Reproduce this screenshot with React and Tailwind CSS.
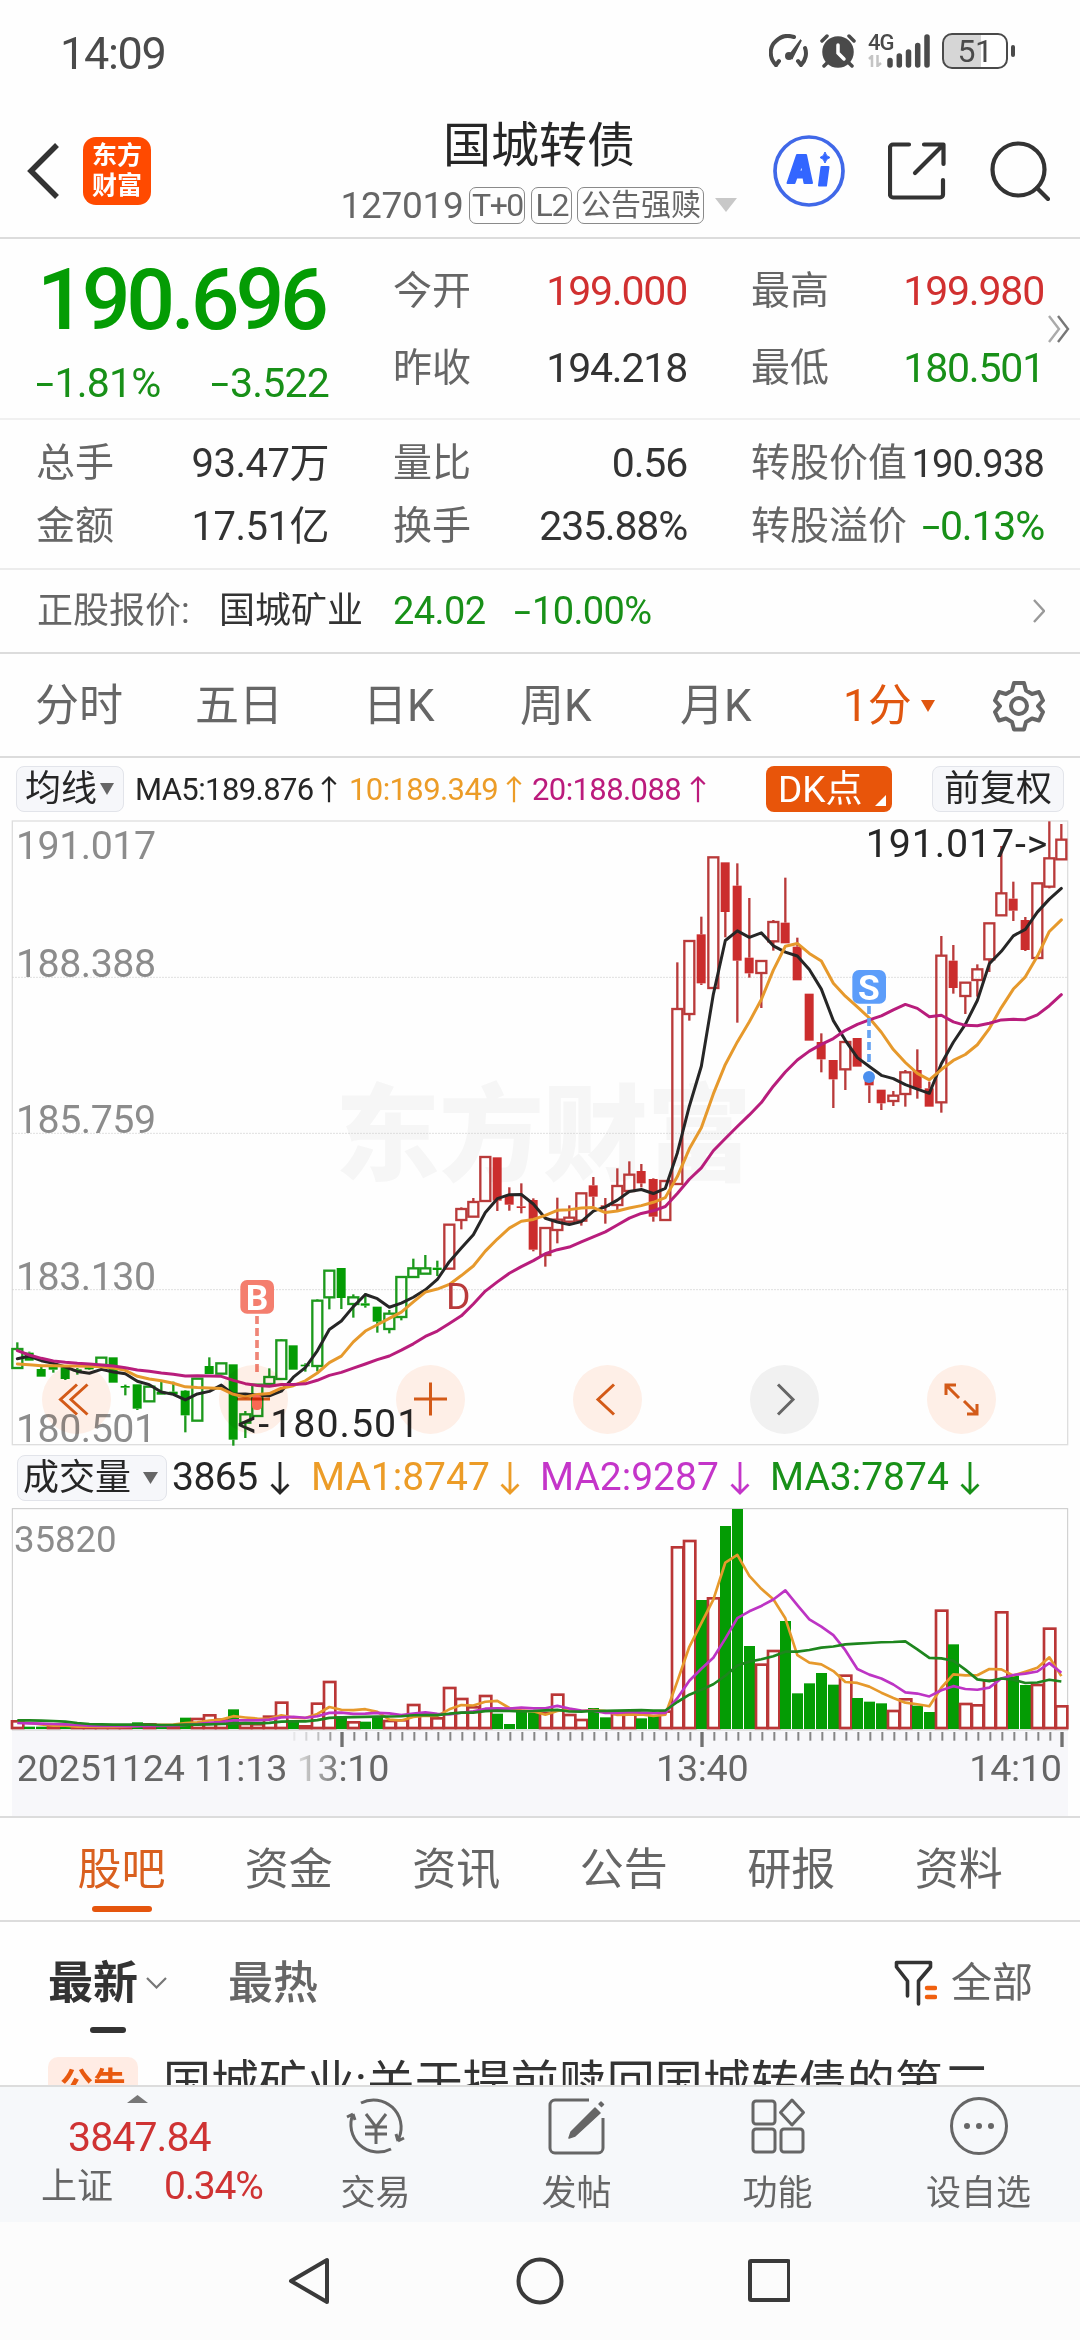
import React from 'react'

const RED = '#b93a3a'
const SOLID_RED = '#cb2d2d'
const GREEN = '#1c991c'
const SOLID_GREEN = '#049c04'

// every chart coordinate is in thirds of a pixel
const STEP = 36
const FIRST = 52
const cx = (i) => FIRST + i * STEP

const shift = (rows, dy) => rows.map(([t, ...v]) => [t, ...v.map((n) => n + dy)])

// [type, high, top, bottom, low], upper case = hollow, lower case = solid
const candles = [
    ...shift([
        ['G', 307, 327, 384, 384], ['g', 335, 338, 362, 362], ['g', 375, 387, 410, 410], ['g', 380, 380, 389, 398],
        ['g', 380, 382, 417, 420], ['g', 384, 388, 394, 404], ['g', 377, 382, 388, 390], ['G', 353, 353, 375, 385],
        ['g', 352, 352, 428, 428], ['g', 434, 438, 443, 466], ['g', 433, 433, 506, 510], ['G', 440, 440, 484, 484],
        ['g', 425, 455, 464, 464], ['g', 425, 455, 463, 463], ['g', 450, 452, 526, 577], ['G', 416, 416, 542, 542],
        ['g', 352, 378, 402, 402], ['G', 370, 370, 401, 401], ['g', 373, 373, 599, 617], ['G', 513, 523, 548, 594],
        ['G', 434, 434, 528, 528], ['G', 385, 411, 432, 432], ['G', 298, 301, 417, 417], ['g', 316, 316, 389, 389],
        ['g', 370, 374, 379, 395], ['G', 178, 182, 378, 394], ['G', 92, 92, 172, 208], ['g', 84, 84, 174, 207],
        ['G', 163, 172, 192, 233], ['g', 160, 190, 197, 203],
    ], 1260),
    ...shift([
        ['g', 770, 770, 815, 848], ['G', 780, 791, 837, 850], ['G', 681, 681, 801, 811], ['G', 626, 655, 681, 681],
        ['G', 615, 655, 671, 671], ['g', 632, 653, 660, 678], ['R', 524, 524, 656, 656], ['R', 472, 477, 510, 538],
        ['R', 444, 456, 500, 500], ['R', 321, 321, 453, 453], ['r', 322, 322, 452, 483], ['r', 412, 438, 464, 482],
        ['r', 400, 469, 474, 490], ['r', 445, 450, 599, 604], ['R', 534, 534, 615, 650], ['R', 443, 509, 540, 580],
        ['R', 466, 503, 515, 520], ['R', 430, 430, 512, 527], ['r', 381, 406, 440, 470], ['r', 444, 466, 471, 521],
        ['R', 355, 408, 465, 483], ['R', 334, 374, 423, 423], ['r', 342, 363, 400, 412], ['r', 385, 387, 500, 515],
        ['R', 393, 393, 510, 510],
    ], 690),
    ...shift([
        ['R', 457, 597, 1122, 1122], ['R', 390, 393, 612, 632], ['r', 320, 373, 520, 525], ['R', 142, 142, 534, 534],
        ['r', 157, 157, 306, 382], ['r', 160, 227, 452, 638], ['r', 264, 443, 490, 503], ['R', 453, 453, 489, 594],
        ['R', 330, 336, 394, 422], ['r', 203, 338, 400, 400], ['r', 383, 410, 511, 511], ['r', 551, 551, 692, 692],
        ['r', 670, 696, 748, 787], ['r', 750, 750, 808, 894], ['R', 696, 696, 778, 840], ['r', 684, 684, 770, 770],
        ['r', 796, 800, 826, 879], ['r', 839, 839, 880, 900], ['R', 843, 857, 873, 888], ['R', 780, 787, 852, 890],
        ['r', 718, 780, 836, 866], ['r', 815, 835, 890, 890], ['R', 378, 437, 877, 908], ['r', 405, 452, 534, 551],
        ['R', 518, 518, 558, 612], ['R', 463, 478, 510, 560], ['R', 340, 340, 448, 486], ['R', 108, 250, 316, 316],
        ['r', 215, 266, 302, 333], ['r', 321, 330, 420, 423], ['R', 220, 220, 444, 444], ['R', 34, 145, 230, 235],
        ['R', 42, 89, 148, 148],
    ], -30),
]

const volumes = [
    'R23', 'g7', 'g7', 'R8', 'g6', 'R7', 'R6', 'R6', 'R7', 'R9', 'g20', 'R14', 'g12', 'R10', 'g34', 'R30', 'R41', 'R28',
    'g59', 'R15', 'R14', 'R37', 'R79', 'g26', 'R8', 'R76', 'R141', 'g38', 'R20', 'g22', 'g36', 'R24', 'R26', 'R72', 'R42',
    'R32', 'R123', 'R90', 'R65', 'R99', 'g46', 'g15', 'g55', 'g50', 'R48', 'R103', 'R42', 'R27', 'g63', 'g35', 'R45',
    'R45', 'g32', 'g40', 'R52', 'R545', 'R564', 'g387', 'R392', 'g609', 'g660', 'g249', 'R193', 'R234', 'g324', 'g107',
    'g137', 'g168', 'g133', 'R160', 'g93', 'g82', 'g77', 'R54', 'R89', 'g70', 'g51', 'R355', 'g254', 'R75', 'R71',
    'R145', 'R350', 'g160', 'g132', 'R132', 'R301', 'R68',
].map((s) => ({ type: s[0], value: Number(s.slice(1)) }))

// moving average; `head` holds the values that depend on bars left of the view
function average(values, n, head) {
    return values.map((_, i) => {
        if (i < head.length) return head[i]
        const part = values.slice(i - n + 1, i + 1)
        return part.reduce((a, b) => a + b, 0) / n
    })
}

const toPoints = (values) => values.map((v, i) => `${cx(i)},${v.toFixed(1)}`).join(' ')

const closes = candles.map(([t, , top, bottom]) => (t === t.toUpperCase() ? top : bottom))
const ma5 = average(closes, 5, [1616, 1609, 1622, 1630])
const ma10 = average(closes, 10, [1632, 1634, 1637, 1637, 1638, 1638, 1639, 1640, 1644])
const ma20 = average(closes, 20, [1592, 1605, 1615, 1623, 1627, 1630, 1632, 1635, 1638, 1643, 1650, 1654, 1659, 1663, 1668, 1667, 1668, 1669, 1681])

const VOL_BASE = 663
const vols = volumes.map((v) => v.value)
const volLine = (n, head) => toPoints(average(vols, n, head).map((v) => VOL_BASE - v))
const vol5 = volLine(5, [20, 18, 14, 10])
const vol10 = volLine(10, [18, 17, 16, 15, 14, 12, 10, 9, 9])
const vol20 = volLine(20, [26, 26, 25, 24, 22, 18, 15, 14, 13, 13, 13, 13, 12, 12, 13, 13, 14, 15, 16])

function Candle({ i, row }) {
    const [type, high, top, bottom, low] = row
    const x = cx(i)
    const green = type.toLowerCase() === 'g'
    const hollow = type === type.toUpperCase()
    const line = green ? GREEN : RED
    return (
        <g>
            {high < top && <line x1={x} x2={x} y1={high} y2={top} stroke={line} strokeWidth="7" />}
            {low > bottom && <line x1={x} x2={x} y1={bottom} y2={low} stroke={line} strokeWidth="7" />}
            {hollow ? (
                <rect x={x - 15} y={top} width="30" height={bottom - top} fill="none" stroke={line} strokeWidth="7" />
            ) : (
                <rect x={x - 14} y={top} width="27" height={bottom - top} fill={green ? SOLID_GREEN : SOLID_RED} />
            )}
        </g>
    )
}

function Arrow({ down, className = '' }) {
    return (
        <svg viewBox="0 0 20 34" className={className} fill="none" stroke="currentColor" strokeWidth="2.8">
            {down ? <path d="M10 1v31M1.5 23.5L10 32l8.5-8.5" /> : <path d="M10 33V2M1.5 10.500L10 2l8.500 8.500" />}
        </svg>
    )
}

function Triangle({ className = '' }) {
    return (
        <svg viewBox="0 0 14 12" preserveAspectRatio="none" className={className} fill="currentColor">
            <path d="M0 0h14L7 12z" />
        </svg>
    )
}

// number with a wide minus sign
function Signed({ value }) {
    if (value[0] !== '-') return value
    return (
        <>
            <span className="inline-block scale-x-[1.6] ml-[2px] mr-[5px]">-</span>
            {value.slice(1)}
        </>
    )
}

function StatusBar() {
    return (
        <div className="h-[105px] flex items-center justify-between pl-[60px] pr-[65px] text-[#4a4a4a]">
            <span className="text-[45px] leading-none tracking-[-1.3px] mt-[2px]">14:09</span>
            <div className="flex items-center h-[36px] -mt-[3px]">
                <svg viewBox="0 0 39 34" className="w-[39px] h-[34px] mr-[12px]" fill="none" stroke="currentColor" strokeWidth="4" strokeLinecap="round">
                    <path d="M7 31C0 24 0 13 7 7c5-5 12-6 18-4" />
                    <path d="M7 31l3-4M32 31c5-5 6-12 4-17M32 31l-3-4" />
                    <path d="M20 22L32 6l-9 18z" fill="currentColor" strokeWidth="2" />
                    <circle cx="20" cy="22" r="3" fill="currentColor" strokeWidth="2" />
                </svg>
                <svg viewBox="0 0 36 34" className="w-[36px] h-[34px] mr-[12px]" stroke="currentColor" strokeWidth="3.500" strokeLinecap="round">
                    <circle cx="18" cy="18" r="14" fill="currentColor" />
                    <path d="M2 7l5-5M34 7l-5-5M7 29l-3 3M29 29l3 3" fill="none" />
                    <path d="M18 11v8l6 6" fill="none" stroke="#fff" />
                </svg>
                <div className="w-[25px] h-[36px] flex flex-col">
                    <span className="text-[22px] leading-[19px] font-medium tracking-[-1px]">4G</span>
                    <svg viewBox="0 0 14 12" className="w-[14px] h-[12px] mt-[3px] text-[#c4c4c4]" fill="none" stroke="currentColor" strokeWidth="2.500">
                        <path d="M1 4l3-3v11M9.500 0v11l3.500-3" />
                    </svg>
                </div>
                <svg viewBox="0 0 44 34" className="w-[44px] h-[34px] -ml-[6px] mr-[11px]" stroke="currentColor" strokeWidth="5.500" strokeLinecap="round">
                    <path d="M3 26.500v4.500M12.300 22v9M21.500 18v13M30.700 11.500v19.500M40 3v28" />
                </svg>
                <div className="w-[66px] h-[36px] rounded-[10px] border-[2.5px] border-[#4a4a4a] bg-gradient-to-r from-[#d6d6d6] from-[60%] to-white to-[60%] flex items-center justify-center text-[32px] leading-none tracking-[-0.5px]">
                    51
                </div>
                <div className="w-[4px] h-[12px] rounded-full bg-[#4a4a4a] ml-[3px]" />
            </div>
        </div>
    )
}

function Header() {
    return (
        <div className="h-[134px] grid grid-cols-[342px_394px_1fr] border-b-[2px] border-[#dcdcdc]">
            <div className="flex items-center pl-[26px]">
                <svg viewBox="0 0 34 56" className="w-[34px] h-[56px]" fill="none" stroke="#333" strokeWidth="5.500">
                    <path d="M31 2L5 28l26 26" />
                </svg>
                <div className="ml-[23px] w-[68px] h-[68px] rounded-[13px] bg-[#ff4a00] text-white text-[25px] leading-[30px] font-bold flex flex-col items-center justify-center">
                    <span>东方</span>
                    <span>财富</span>
                </div>
            </div>
            <div className="flex flex-col items-center pt-[6px]">
                <div className="h-[70px] flex items-center text-[48px] leading-none text-[#262626] whitespace-nowrap">国城转债</div>
                <div className="h-[48px] flex items-center text-[#666] leading-none whitespace-nowrap">
                    <span className="text-[37px] tracking-[-0.3px] mr-[6px]">127019</span>
                    <span className="h-[37px] w-[56px] flex items-center justify-center border-[1.5px] border-[#8a8a8a] rounded-[7px] text-[32px] tracking-[-1.5px] mr-[6px]">T+0</span>
                    <span className="h-[37px] w-[41px] flex items-center justify-center border-[1.5px] border-[#8a8a8a] rounded-[7px] text-[32px] tracking-[-1px] mr-[5px]">L2</span>
                    <span className="h-[37px] w-[127px] flex items-center justify-center border-[1.5px] border-[#8a8a8a] rounded-[7px] text-[30px] mr-[11px]">公告强赎</span>
                    <Triangle className="w-[22px] h-[14px] text-[#c8c8c8]" />
                </div>
            </div>
            <div className="flex items-center pl-[37px]">
                <svg viewBox="0 0 72 72" className="w-[72px] h-[72px]">
                    <circle cx="36" cy="36" r="34" fill="none" stroke="#4068e8" strokeWidth="3.700" />
                    <g fill="#3366ff" stroke="#3366ff" strokeWidth="2" strokeLinejoin="round">
                        <path fillRule="evenodd" d="M14.500 48L24 20h9l6 28h-7.500l-1-5.500h-7L21.500 48zM26 36.500h4L29 29z" />
                        <path d="M48.500 32h7l-2.500 18.500h-7z" />
                        <path d="M52 17q1 4.500 5 5.500-4 1-5 5.500-1-4.500-5-5.500 4-1 5-5.500z" strokeWidth="1" />
                    </g>
                </svg>
                <svg viewBox="0 0 58 58" className="w-[58px] h-[58px] ml-[43px]" fill="none" stroke="#333" strokeWidth="4.200" strokeLinecap="round" strokeLinejoin="round">
                    <path d="M21 2.500H5a3 3 0 0 0-3 3v47a3 3 0 0 0 3 3h47a3 3 0 0 0 3-3V38" />
                    <path d="M36 2.500h19.500V22M55 3L27 31" />
                </svg>
                <svg viewBox="0 0 60 60" className="w-[60px] h-[60px] ml-[44px]" fill="none" stroke="#333" strokeWidth="4.200" strokeLinecap="round">
                    <circle cx="28.500" cy="28.500" r="26" />
                    <path d="M47 47l11 11" />
                </svg>
            </div>
        </div>
    )
}

function Field({ label, value, tone = 'text-[#333]', size = 'text-[41px] tracking-[-1.2px]', className = 'h-[77px]' }) {
    return (
        <div className={`flex items-center justify-between leading-none whitespace-nowrap ${className}`}>
            <span className="text-[39px] -mx-[1px] text-[#666]">{label}</span>
            <span className={`${size} ${tone}`}>
                <Signed value={value} />
            </span>
        </div>
    )
}

function Quote() {
    return (
        <div>
            <div className="relative h-[181px] grid grid-cols-[292px_293px_292px] gap-x-[65px] pl-[37px] border-b-[2px] border-[#f0f0f0]">
                <div className="pt-[15px] leading-none whitespace-nowrap">
                    <div className="h-[92px] flex items-center text-[86px] font-medium tracking-[-4.2px] text-[#049c04]">190.696</div>
                    <div className="h-[74px] flex items-center justify-between text-[41px] tracking-[-0.8px] text-[#189018]">
                        <span><Signed value="-1.81%" /></span>
                        <span><Signed value="-3.522" /></span>
                    </div>
                </div>
                <div className="pt-[14px]">
                    <Field label="今开" value="199.000" tone="text-[#d13030]" />
                    <Field label="昨收" value="194.218" />
                </div>
                <div className="pt-[14px]">
                    <Field label="最高" value="199.980" tone="text-[#d13030]" />
                    <Field label="最低" value="180.501" tone="text-[#189018]" />
                </div>
                <svg viewBox="0 0 24 28" className="absolute right-[9px] top-[76px] w-[24px] h-[28px]" fill="none" strokeWidth="2.400">
                    <path d="M2 1l10 13L2 27" stroke="#aaa" />
                    <path d="M11 1l10 13-10 13" stroke="#777" />
                </svg>
            </div>
            <div className="h-[150px] grid grid-cols-[292px_293px_292px] gap-x-[65px] pl-[37px] pt-[12px] border-b-[2px] border-[#ececec]">
                <div>
                    <Field className="h-[63px]" label="总手" value="93.47万" size="text-[40px] tracking-[-0.5px]" />
                    <Field className="h-[63px]" label="金额" value="17.51亿" size="text-[40px] tracking-[-0.5px]" />
                </div>
                <div>
                    <Field className="h-[63px]" label="量比" value="0.56" />
                    <Field className="h-[63px]" label="换手" value="235.88%" />
                </div>
                <div>
                    <Field className="h-[63px]" label="转股价值" value="190.938" size="text-[38px] tracking-[-0.8px]" />
                    <Field className="h-[63px]" label="转股溢价" value="-0.13%" tone="text-[#189018]" />
                </div>
            </div>
            <div className="h-[84px] flex items-center pl-[37px] pr-[35px] leading-none border-b-[2px] border-[#dcdcdc] whitespace-nowrap">
                <span className="w-[182px] text-[36px] text-[#666]">正股报价:</span>
                <span className="w-[174px] text-[36px] text-[#333]">国城矿业</span>
                <span className="w-[122px] text-[38px] tracking-[-0.6px] text-[#189018]">24.02</span>
                <span className="text-[38px] tracking-[-0.6px] text-[#189018]"><Signed value="-10.00%" /></span>
                <svg viewBox="0 0 12 24" className="w-[12px] h-[24px] ml-auto" fill="none" stroke="#999" strokeWidth="2.400">
                    <path d="M1 1l10 11L1 23" />
                </svg>
            </div>
        </div>
    )
}

const periods = [
    ['分时', 'w-[160px]'],
    ['五日', 'w-[168px]'],
    ['日K', 'w-[157px]'],
    ['周K', 'w-[160px]'],
    ['月K', 'w-[163px]'],
]

function PeriodTabs() {
    return (
        <div className="h-[104px] flex items-center pl-[35px] pt-[2px] text-[44px] leading-none text-[#666] border-b-[2px] border-[#dcdcdc] whitespace-nowrap">
            {periods.map(([name, width]) => (
                <span key={name} className={width}>{name}</span>
            ))}
            <span className="text-[#e0560f]">1分</span>
            <Triangle className="w-[14px] h-[12px] ml-[9px] text-[#e0560f]" />
            <svg viewBox="0 0 52 52" className="w-[52px] h-[52px] ml-auto mr-[35px]" fill="none" stroke="#666" strokeWidth="4" strokeLinejoin="round">
                <path d="M21 3h10l2 7.500 6 3.500 7-2 4 8.500-5 5.500 5 6-4 8.500-7-2-6 3.500-2 7.500H21l-2-7.500-6-3.500-7 2L2 32l5-6-5-5.500L6 12l7 2 6-3.500z" />
                <circle cx="26" cy="26" r="8" />
            </svg>
        </div>
    )
}

function MaRow() {
    return (
        <div className="h-[62px] flex items-center pl-[16px] leading-none whitespace-nowrap text-[31px] tracking-[-0.6px]">
            <div className="w-[108px] h-[46px] flex items-center pl-[8px] rounded-[8px] border-[1.5px] border-[#e2e4ea] bg-[#f6f7fa] text-[36px] tracking-normal text-[#262626]">
                均线
                <Triangle className="w-[14px] h-[12px] ml-[3px] text-[#666]" />
            </div>
            <span className="flex items-center w-[214px] ml-[11px] text-[#262626]">
                <span className="w-[186px]">MA5:189.876</span>
                <Arrow className="w-[16px] h-[27px]" />
            </span>
            <span className="flex items-center w-[183px] text-[#ec9c27]">
                <span className="w-[157px]">10:189.349</span>
                <Arrow className="w-[16px] h-[27px]" />
            </span>
            <span className="flex items-center w-[234px] text-[#bb1b7c]">
                <span className="w-[158px]">20:188.088</span>
                <Arrow className="w-[16px] h-[27px]" />
            </span>
            <div className="relative w-[126px] h-[46px] flex items-center pl-[12px] rounded-[8px] bg-[#e8550a] text-white text-[37px] tracking-normal">
                DK点
                <svg viewBox="0 0 11 11" className="absolute right-[6px] bottom-[6px] w-[11px] h-[11px]" fill="#fff">
                    <path d="M11 0v11H0z" />
                </svg>
            </div>
            <div className="w-[132px] h-[46px] ml-[40px] flex items-center justify-center rounded-[8px] border-[1.5px] border-[#e2e4ea] bg-[#f6f7fa] text-[36px] tracking-normal text-[#262626]">
                前复权
            </div>
        </div>
    )
}

// axis labels: [text, baseline]
const prices = [
    ['191.017', 117],
    ['188.388', 470],
    ['185.759', 939],
    ['183.130', 1410],
    ['180.501', 1865],
]

const tools = [
    { name: 'first', bg: 'bg-[#fff0e8]', path: 'M35 19.500L18.500 34.500l16.500 15M45.500 19.500L29 34.500l16.500 15' },
    { name: 'minus', bg: 'bg-[#fff0e8]', path: 'M18 34h33' },
    { name: 'plus', bg: 'bg-[#fff0e8]', path: 'M18 34h33M34.500 17.500v33' },
    { name: 'prev', bg: 'bg-[#fff0e8]', path: 'M41 19.500L25 34.500l16 15' },
    { name: 'next', bg: 'bg-[#f2f2f2]', path: 'M28 19.500l15 15-15 15', gray: true },
    { name: 'full', bg: 'bg-[#fff0e8]', path: 'M19 30V20h10M19.500 20.500L32 33M50 39v10H40M49.500 48.500L37 36' },
]

function PriceChart() {
    return (
        <div className="relative h-[627px]">
            <svg viewBox="0 0 3240 1881" className="w-[1080px] h-[627px] block" fill="none">
                <text x="1005" y="1055" fontSize="315" fontWeight="900" fill="#f6f6f6" textLength="1250">东方财富</text>
                <rect x="37" y="3" width="3166" height="1871" stroke="#dedede" strokeWidth="4" />
                {[472, 940, 1409].map((y) => (
                    <line key={y} x1="37" x2="3203" y1={y} y2={y} stroke="#cfcfcf" strokeWidth="3" strokeDasharray="4 5" />
                ))}
                {prices.map(([label, y]) => (
                    <text key={label} x="48" y={y} fontSize="118" fill="#8c8c8c" textLength="420">{label}</text>
                ))}
                {candles.map((row, i) => (
                    <Candle key={i} i={i} row={row} />
                ))}
                <g strokeWidth="9" strokeLinejoin="round" strokeLinecap="round">
                    <polyline points={toPoints(ma5)} stroke="#262626" />
                    <polyline points={toPoints(ma10)} stroke="#e6992c" />
                    <polyline points={toPoints(ma20)} stroke="#b81d7c" />
                </g>
                <text x="1338" y="1467" fontSize="112" fill={RED}>D</text>

                {/* buy and sell marks */}
                <line x1="771" x2="771" y1="1488" y2="1656" stroke="#ef8577" strokeWidth="11" strokeDasharray="24 12" />
                <rect x="756" y="1725" width="30" height="45" rx="13" fill="#f8705c" />
                <rect x="721" y="1380" width="101" height="101" rx="20" fill="#f47e6e" />
                <text x="771" y="1469" fontSize="106" fontWeight="700" fill="#fff" textAnchor="middle">B</text>
                <line x1="2607" x2="2607" y1="558" y2="726" stroke="#66a3f2" strokeWidth="11" strokeDasharray="24 12" />
                <circle cx="2607" cy="771" r="18" fill="#4a8fee" />
                <rect x="2557" y="450" width="101" height="101" rx="20" fill="#5c9dfa" />
                <text x="2607" y="540" fontSize="106" fontWeight="700" fill="#fff" textAnchor="middle">S</text>

                <text x="2597" y="110" fontSize="118" fill="#262626" textLength="545">191.017-&gt;</text>
                <text x="712" y="1850" fontSize="118" fill="#262626" textLength="546">&lt;-180.501</text>
            </svg>
            {/* multiply keeps the candles under the round buttons visible */}
            <div className="absolute left-[42px] top-[545px] flex gap-[108px] mix-blend-multiply">
                {tools.map((t) => (
                    <button key={t.name} className={`w-[69px] h-[69px] rounded-full ${t.bg}`}>
                        <svg viewBox="0 0 69 69" className="w-[69px] h-[69px]" fill="none" stroke={t.gray ? '#666' : '#d45a18'} strokeWidth="3">
                            <path d={t.path} />
                        </svg>
                    </button>
                ))}
            </div>
        </div>
    )
}

function VolumeRow() {
    return (
        <div className="h-[61px] flex items-center pl-[17px] leading-none whitespace-nowrap text-[39px]">
            <div className="w-[150px] h-[46px] flex items-center pl-[5px] rounded-[8px] border-[1.5px] border-[#e2e4ea] bg-[#f6f7fa] text-[36px] text-[#262626]">
                成交量
                <Triangle className="w-[15px] h-[12px] ml-[12px] text-[#666]" />
            </div>
            <span className="flex items-center w-[139px] ml-[5px] text-[#262626]">
                <span className="w-[98px] tracking-[-0.5px]">3865</span>
                <Arrow down className="w-[20px] h-[34px]" />
            </span>
            <span className="flex items-center w-[229px] text-[#ec9c27]">
                <span className="w-[189px]">MA1:8747</span>
                <Arrow down className="w-[20px] h-[34px]" />
            </span>
            <span className="flex items-center w-[230px] text-[#c435c9]">
                <span className="w-[190px]">MA2:9287</span>
                <Arrow down className="w-[20px] h-[34px]" />
            </span>
            <span className="flex items-center text-[#189018]">
                <span className="w-[190px]">MA3:7874</span>
                <Arrow down className="w-[20px] h-[34px]" />
            </span>
        </div>
    )
}

const MAJOR = [27, 57, 87]
const FADE = { 23: 0.15, 24: 0.3, 25: 0.5, 26: 0.8 }

function VolumeChart() {
    return (
        <svg viewBox="0 0 3240 924" className="w-[1080px] h-[308px] block" fill="none">
            <defs>
                <linearGradient id="fade" gradientUnits="userSpaceOnUse" x1="890" x2="1030" y1="0" y2="0">
                    <stop offset="0" stopColor="#dedede" />
                    <stop offset="1" stopColor="#666" />
                </linearGradient>
            </defs>
            <rect x="36" y="668" width="3168" height="256" fill="#f7f7fa" />
            <rect x="37" y="2" width="3166" height="664" stroke="#c9c9c9" strokeWidth="3" />
            <text x="42" y="132" fontSize="110" fill="#8c8c8c" textLength="308">35820</text>
            {volumes.map(({ type, value }, i) =>
                type === 'g' ? (
                    <rect key={i} x={cx(i) - 16} y={VOL_BASE - value} width="33" height={value} fill={SOLID_GREEN} />
                ) : (
                    <rect key={i} x={cx(i) - 16} y={VOL_BASE - value} width="34" height={Math.max(value - 3, 3)} stroke="#ba3636" strokeWidth="8" />
                )
            )}
            <g strokeWidth="8" strokeLinejoin="round">
                <polyline points={vol5} stroke="#e6992c" />
                <polyline points={vol10} stroke="#bd34c4" />
                <polyline points={vol20} stroke="#1e861e" />
            </g>
            {volumes.map((_, i) =>
                i < 23 ? null : MAJOR.includes(i) ? (
                    <rect key={i} x={cx(i) - 3} y="672" width="10" height="45" fill="#707070" />
                ) : (
                    <rect key={i} x={cx(i)} y="672" width="6" height="26" fill="#858585" opacity={FADE[i] ?? 1} />
                )
            )}
            <g fontSize="113" fill="#666">
                <text x="50" y="818" textLength="812">20251124 11:13</text>
                <text x="890" y="818" textLength="278" fill="url(#fade)">13:10</text>
                <text x="1968" y="818" textLength="278">13:40</text>
                <text x="2908" y="818" textLength="278">14:10</text>
            </g>
        </svg>
    )
}

function Forum() {
    return (
        <div className="h-[271px] overflow-hidden border-t-[2px] border-b-[2px] border-[#dcdcdc] whitespace-nowrap leading-none">
            <div className="h-[104px] flex pl-[38px] border-b-[2px] border-[#dcdcdc] text-[44px] text-[#666]">
                <div className="relative w-[167px] pt-[2px] flex items-center justify-center text-[#d9601f]">
                    股吧
                    <span className="absolute bottom-[8px] w-[60px] h-[6px] rounded-full bg-[#e5550d]" />
                </div>
                {['资金', '资讯', '公告', '研报', '资料'].map((name) => (
                    <div key={name} className="w-[167.5px] pt-[2px] flex items-center justify-center">{name}</div>
                ))}
            </div>
            <div className="h-[122px] flex items-center pl-[48px] pr-[47px] text-[45px] text-[#666]">
                <div className="relative flex items-center w-[180px] font-bold text-[#333]">
                    最新
                    <svg viewBox="0 0 21 12" className="w-[21px] h-[12px] ml-[8px]" fill="none" stroke="#777" strokeWidth="2.200">
                        <path d="M1 1l9.500 9.500L20 1" />
                    </svg>
                    <span className="absolute left-[42px] top-[66px] w-[36px] h-[6px] rounded-full bg-[#333]" />
                </div>
                <span className="font-medium">最热</span>
                <svg viewBox="0 0 43 46" className="w-[43px] h-[46px] ml-auto mr-[14px]" fill="none" stroke="#333" strokeWidth="3.600" strokeLinecap="round" strokeLinejoin="round">
                    <path d="M13.500 36V21L2.500 7V2.500h34V7L24.500 21v23" />
                    <path d="M33 28h8M33 37h8" stroke="#f0600f" strokeWidth="4.500" />
                </svg>
                <span className="text-[41px]">全部</span>
            </div>
            <div className="flex items-start pl-[48px] pt-[13px]">
                <span className="w-[90px] h-[54px] rounded-[10px] bg-[#ffece4] flex items-center justify-center text-[33px] font-bold text-[#e8590f]">公告</span>
                <span className="ml-[25px] text-[48px] leading-[54px] text-[#333]">国城矿业:关于提前赎回国城转债的第二</span>
            </div>
        </div>
    )
}

const actions = [
    {
        label: '交易',
        icon: (
            <>
                <path d="M17 6a27.500 27.500 0 0 1 38 35l-1.500 3M54 44l6-3M54 44l-2-7" />
                <path d="M47 52A27.500 27.500 0 0 1 9 17M9 17l-6 3M9 17l2 6" />
                <path d="M22 17l10 13 10-13M21 30h22M21 37h22M32 30v17" />
            </>
        ),
    },
    {
        label: '发帖',
        icon: (
            <>
                <path d="M44 3H10a5 5 0 0 0-5 5v43a5 5 0 0 0 5 5h43a5 5 0 0 0 5-5V21" />
                <path d="M50 11l5 5-25 23-6 2 2-6zM54 7l2-2 2.500 2.500-2 2z" fill="#666" strokeWidth="1.500" />
            </>
        ),
    },
    {
        label: '功能',
        icon: (
            <>
                <rect x="7" y="4" width="22" height="23" rx="3" />
                <rect x="7" y="32" width="22" height="23" rx="3" />
                <rect x="35" y="32" width="22" height="23" rx="3" />
                <path d="M46 3l11.500 12.500L46 28 34.500 15.500z" />
            </>
        ),
    },
    {
        label: '设自选',
        icon: (
            <>
                <circle cx="32" cy="29" r="27.500" />
                <g fill="#666" stroke="none">
                    <circle cx="20" cy="29" r="3" />
                    <circle cx="32" cy="29" r="3" />
                    <circle cx="44" cy="29" r="3" />
                </g>
            </>
        ),
    },
]

function BottomBar() {
    return (
        <div className="h-[135px] flex bg-[#f6f8fa] leading-none whitespace-nowrap">
            <div className="relative w-[275px] pt-[26px]">
                <Triangle className="absolute left-[127px] top-[8px] w-[21px] h-[8px] rotate-180 text-[#777]" />
                <div className="h-[49px] flex items-center pl-[68px] text-[41px] tracking-[-0.9px] text-[#cf3333]">3847.84</div>
                <div className="h-[49px] flex items-center pl-[41px]">
                    <span className="w-[123px] text-[36px] text-[#666]">上证</span>
                    <span className="text-[39px] tracking-[-1.2px] text-[#cf3333]">0.34%</span>
                </div>
            </div>
            {actions.map(({ label, icon }) => (
                <div key={label} className="w-[201px] flex flex-col items-center pt-[10px] text-[35px] text-[#666]">
                    <svg viewBox="0 0 64 58" className="w-[64px] h-[58px]" fill="none" stroke="#666" strokeWidth="3" strokeLinejoin="round">
                        {icon}
                    </svg>
                    <span className="mt-[21px]">{label}</span>
                </div>
            ))}
        </div>
    )
}

function NavBar() {
    return (
        <div className="h-[118px] flex items-center pl-[286px] bg-[#fcfcfc]">
            <svg viewBox="0 0 504 50" className="w-[504px] h-[50px]" fill="none" stroke="#3a3a3a" strokeWidth="4" strokeLinejoin="round">
                <path d="M41 4v42L5 25z" />
                <circle cx="254" cy="25" r="21.500" />
                <rect x="464" y="5" width="39" height="39" rx="1" />
            </svg>
        </div>
    )
}

function App() {
    return (
        <div className="w-[1080px] h-[2340px] overflow-hidden bg-[#fefefe] font-['Roboto','Noto_Sans_CJK_SC',sans-serif]">
            <StatusBar />
            <Header />
            <Quote />
            <PeriodTabs />
            <MaRow />
            <PriceChart />
            <VolumeRow />
            <VolumeChart />
            <Forum />
            <BottomBar />
            <NavBar />
        </div>
    )
}

export default App
